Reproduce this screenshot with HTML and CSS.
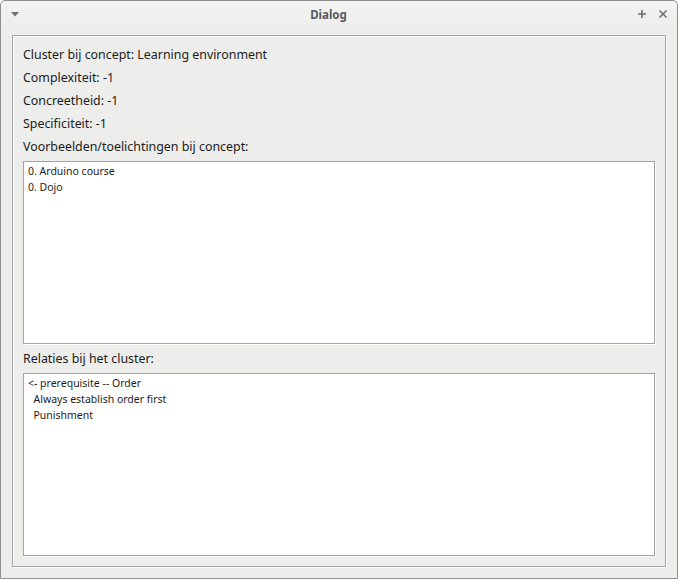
FILE: index.html
```html
<!DOCTYPE html>
<html>
<head>
<meta charset="utf-8">
<link rel="stylesheet" href="styles.css">
</head>
<body>
<div class="window">
  <div class="titlebar">
    <svg class="menu-icon" width="10" height="6" viewBox="0 0 10 6"><polygon points="1,1 9,1 5,5.5" fill="#6e6e6e"/></svg>
    <div class="title">Dialog</div>
    <div class="controls">
      <svg width="10" height="10" viewBox="0 0 10 10"><path d="M5 1v8M1 5h8" stroke="#6e6e6e" stroke-width="1.6"/></svg>
      <svg width="10" height="10" viewBox="0 0 10 10"><path d="M1.5 1.5l7 7M8.5 1.5l-7 7" stroke="#6e6e6e" stroke-width="1.6"/></svg>
    </div>
  </div>
  <div class="content">
    <div class="frame">
      <div class="label">Cluster bij concept: Learning environment</div>
      <div class="label">Complexiteit: -1</div>
      <div class="label">Concreetheid: -1</div>
      <div class="label">Specificiteit: -1</div>
      <div class="label">Voorbeelden/toelichtingen bij concept:</div>
      <div class="textbox">
        <div class="item">0. Arduino course</div>
        <div class="item">0. Dojo</div>
      </div>
      <div class="label">Relaties bij het cluster:</div>
      <div class="textbox">
        <div class="item">&lt;- prerequisite -- Order</div>
        <div class="item">  Always establish order first</div>
        <div class="item">  Punishment</div>
      </div>
    </div>
  </div>
</div>
</body>
</html>
```
FILE: styles.css
```css
html, body {
  margin: 0;
  padding: 0;
  background: #ffffff;
}
.window {
  width: 678px;
  height: 579px;
  box-sizing: border-box;
  border: 1px solid #8e8e8e;
  border-radius: 5px 5px 0 0;
  background: #ededeb;
  font-family: "Noto Sans", "DejaVu Sans", sans-serif;
  display: flex;
  flex-direction: column;
}
.titlebar {
  height: 27px;
  display: flex;
  align-items: center;
  justify-content: space-between;
  padding: 0 9px 0 9px;
  background: linear-gradient(#f3f3f2, #ededeb);
  border-radius: 5px 5px 0 0;
}
.menu-icon {
  margin-top: -2px;
}
.title {
  font-size: 11.5px;
  font-weight: bold;
  color: #555b65;
  margin-left: 0;
  margin-top: -1px;
}
.controls {
  display: flex;
  gap: 11px;
  align-items: center;
  margin-top: -2px;
}
.content {
  flex: 1;
  padding: 7px 11px 11px 11px;
  display: flex;
}
.frame {
  flex: 1;
  border: 1px solid #a3a39f;
  box-shadow: 1px 1px 0 #ffffff, inset 1px 1px 0 #ffffff;
  padding: 10px 10px 10px 10px;
  display: flex;
  flex-direction: column;
  gap: 6px;
}
.label {
  height: 17px;
  line-height: 17px;
  font-size: 12.4px;
  color: #1c1c1c;
  white-space: nowrap;
}
.textbox {
  height: 183px;
  box-sizing: border-box;
  border: 1px solid #a3a39f;
  box-shadow: 1px 1px 0 #ffffff;
  background: #ffffff;
  padding: 1px 4px;
}
.item {
  font-size: 10.5px;
  line-height: 16px;
  color: #1c1c1c;
  white-space: pre;
}
```
